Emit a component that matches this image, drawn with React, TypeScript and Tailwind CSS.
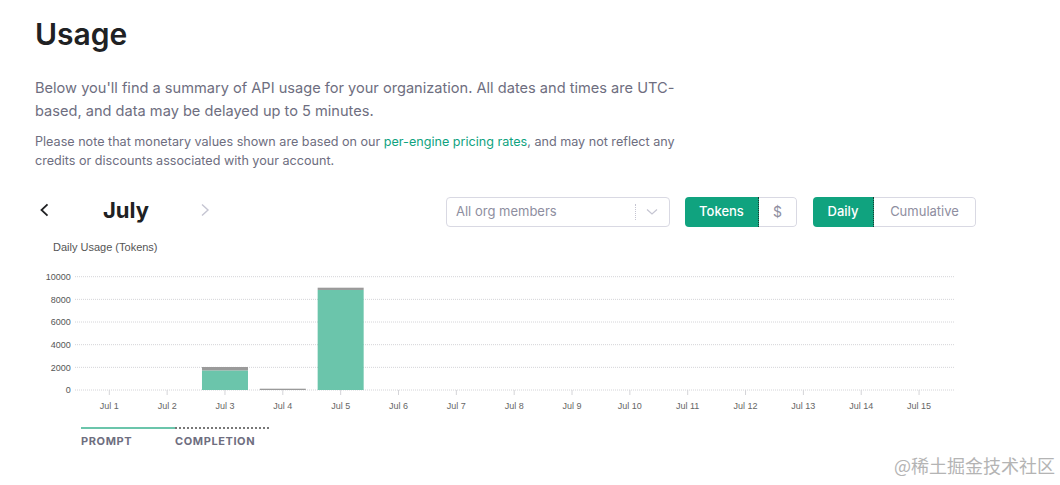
const days = Array.from({ length: 15 }, (_, i) => `Jul ${i + 1}`);

// usage per day: prompt / completion tokens
const usage: Record<number, { prompt: number; completion: number }> = {
  2: { prompt: 1730, completion: 300 },
  3: { prompt: 0, completion: 110 },
  4: { prompt: 8830, completion: 200 },
};

const ticks = [0, 2000, 4000, 6000, 8000, 10000];

// chart geometry, in page coordinates
const x0 = 75;
const x1 = 954;
const yZero = 390;
const perToken = 113.3 / 10000;
const firstCenter = 109.3;
const step = 57.84;
const barW = 46;

function UsageChart() {
  return (
    <svg
      width={920}
      height={160}
      viewBox="40 254 920 160"
      className="block ml-[5px]"
      style={{ fontFamily: '"Liberation Sans", Arial, sans-serif' }}
    >
      {ticks.map((t) => {
        const y = yZero - t * perToken;
        return (
          <g key={t}>
            <line x1={x0} x2={x1} y1={y} y2={y} stroke="#d4d4d8" strokeDasharray="1 1" />
            <text x={70.7} y={y + 3.2} fontSize={9} fill="#555" textAnchor="end">
              {t}
            </text>
          </g>
        );
      })}
      {days.map((d, i) => {
        const cx = firstCenter + i * step;
        return (
          <g key={d}>
            <line x1={cx} x2={cx} y1={yZero} y2={yZero + 5} stroke="#d4d4d8" />
            <text x={cx} y={409} fontSize={9} fill="#666" textAnchor="middle">
              {d}
            </text>
          </g>
        );
      })}
      {Object.entries(usage).map(([k, v]) => {
        const cx = firstCenter + Number(k) * step;
        const hp = v.prompt * perToken;
        const hc = Math.max(v.completion * perToken, 1.3);
        return (
          <g key={k}>
            {hp > 0 && <rect x={cx - barW / 2} y={yZero - hp} width={barW} height={hp} fill="#6bc5ab" />}
            <rect x={cx - barW / 2} y={yZero - hp - hc} width={barW} height={hc} fill="#9a9a9a" />
          </g>
        );
      })}
    </svg>
  );
}

export default function App() {
  return (
    <div
      className="relative w-[1060px] h-[485px] overflow-hidden bg-white pl-[35px] pt-[16px]"
      style={{ fontFamily: 'Inter, "Liberation Sans", sans-serif' }}
    >
      <h1 className="text-[30px] leading-[36px] font-semibold text-[#202123]">Usage</h1>

      <p className="mt-[25px] w-[650px] text-[14.6px] leading-[23.4px] text-[#6e6e80]">
        Below you'll find a summary of API usage for your organization. All dates and times are UTC-based, and
        data may be delayed up to 5 minutes.
      </p>
      <p className="mt-[8px] w-[650px] text-[12.6px] leading-[19px] text-[#6e6e80]">
        Please note that monetary values shown are based on our{" "}
        <span className="text-[#10a37f]">per-engine pricing rates</span>, and may not reflect any credits or
        discounts associated with your account.
      </p>

      {/* Controls */}
      <div className="mt-[27px] flex items-center h-[30px]">
        <div className="w-[411px] flex items-center">
          <svg width="12" height="14" viewBox="0 0 12 14" className="ml-[3px] mb-[3px]">
            <path d="M9.5 1.3 L3.5 7 L9.5 12.7" fill="none" stroke="#202123" strokeWidth="1.8" />
          </svg>
          <div className="w-[148px] pl-[53px] mb-[4px] text-[22px] leading-[28px] font-bold text-[#202123]">
            July
          </div>
          <svg width="12" height="14" viewBox="0 0 12 14" className="mb-[3px]">
            <path d="M4 1.5 L10 7 L4 12.5" fill="none" stroke="#c5c5d2" strokeWidth="1.4" />
          </svg>
        </div>

        <div className="w-[224px] h-[30px] flex items-center border border-[#d9d9e3] rounded-[4px] pl-[9px]">
          <span className="flex-1 text-[13px] text-[#8e8ea0]">All org members</span>
          <span className="h-[16px] border-l border-dotted border-[#c5c5d2]" />
          <svg width="12" height="8" viewBox="0 0 12 8" className="ml-[10px] mr-[11px]">
            <path d="M1 1.5 L6 6 L11 1.5" fill="none" stroke="#c5c5d2" strokeWidth="1.2" />
          </svg>
        </div>

        <div className="ml-[15px] flex h-[30px] rounded-[4px] overflow-hidden">
          <div className="w-[74px] bg-[#10a37f] border-r border-dotted border-[#1c3a30] flex items-center justify-center text-[13px] font-medium text-white">
            Tokens
          </div>
          <div className="w-[38px] border border-l-0 border-[#d9d9e3] rounded-r-[4px] flex items-center justify-center text-[14px] text-[#8e8ea0]">
            $
          </div>
        </div>

        <div className="ml-[16px] flex h-[30px] rounded-[4px] overflow-hidden">
          <div className="w-[61px] bg-[#10a37f] border-r border-dotted border-[#1c3a30] flex items-center justify-center text-[13px] font-medium text-white">
            Daily
          </div>
          <div className="w-[102px] border border-l-0 border-[#d9d9e3] rounded-r-[4px] flex items-center justify-center text-[13px] text-[#8e8ea0]">
            Cumulative
          </div>
        </div>
      </div>

      <div
        className="mt-[13.5px] ml-[18px] text-[11px] leading-[14px] text-[#555]"
        style={{ fontFamily: '"Liberation Sans", Arial, sans-serif' }}
      >
        Daily Usage (Tokens)
      </div>

      <UsageChart />

      {/* Legend */}
      <div className="mt-[13px] ml-[46px] flex text-[11px] leading-[14px] font-bold tracking-[0.6px] text-[#6e6e80]">
        <div className="w-[94px] border-t-2 border-[#6bc5ab] pt-[5px]">PROMPT</div>
        <div className="w-[94px] border-t-2 border-dotted border-[#777] pt-[5px]">COMPLETION</div>
      </div>

      <div
        className="absolute right-[5px] bottom-[6px] text-[18px] text-[#b4b4b4]"
        style={{ fontFamily: '"Noto Sans CJK SC", sans-serif' }}
      >
        @稀土掘金技术社区
      </div>
    </div>
  );
}
